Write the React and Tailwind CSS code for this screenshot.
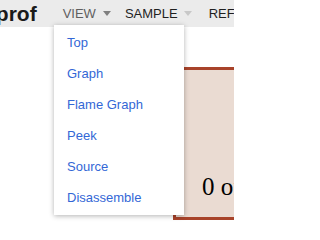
import React from "react";

const views = ["Top", "Graph", "Flame Graph", "Peek", "Source", "Disassemble"];

const Caret = ({ className }) => (
  <svg width="8" height="5" viewBox="0 0 8 5" className={className}>
    <path d="M0 0h8L4 5z" fill="currentColor" />
  </svg>
);

export default function App() {
  return (
    <div
      className="relative w-[234px] h-[239px] overflow-hidden bg-white"
      style={{ fontFamily: '"Liberation Sans", Arial, sans-serif' }}
    >
      <header className="flex items-center h-[27px] bg-[#ebebeb] whitespace-nowrap">
        <span className="ml-[-17px] text-[21px] font-bold text-[#1a1a1a] leading-none">pprof</span>
        <div className="flex items-center ml-[26px] text-[13px] text-[#5f5f5f]">
          VIEW
          <Caret className="ml-[7px] text-[#808080]" />
        </div>
        <div className="flex items-center ml-[14px] text-[13px] text-[#1f1f1f]">
          SAMPLE
          <Caret className="ml-[6px] text-[#c8c8c8]" />
        </div>
        <div className="ml-[17px] text-[13px] text-[#1f1f1f]">REFINE</div>
      </header>

      <div className="mt-[40px] ml-[173px] h-[153px] w-[120px] border-[3px] border-[#a8432a] bg-[#eadbd2]">
        <div
          className="pl-[26px] pt-[104px] text-[25px] leading-none text-black"
          style={{ fontFamily: '"Liberation Serif", "Times New Roman", serif' }}
        >
          0 of
        </div>
      </div>

      <ul className="absolute left-[54px] top-[25px] w-[130px] py-[2px] bg-white shadow-[0_1px_5px_rgba(0,0,0,0.3)]">
        {views.map((v) => (
          <li key={v} className="px-[13px] py-[7px] text-[13px] leading-[17px] text-[#3367d6]">
            {v}
          </li>
        ))}
      </ul>
    </div>
  );
}
